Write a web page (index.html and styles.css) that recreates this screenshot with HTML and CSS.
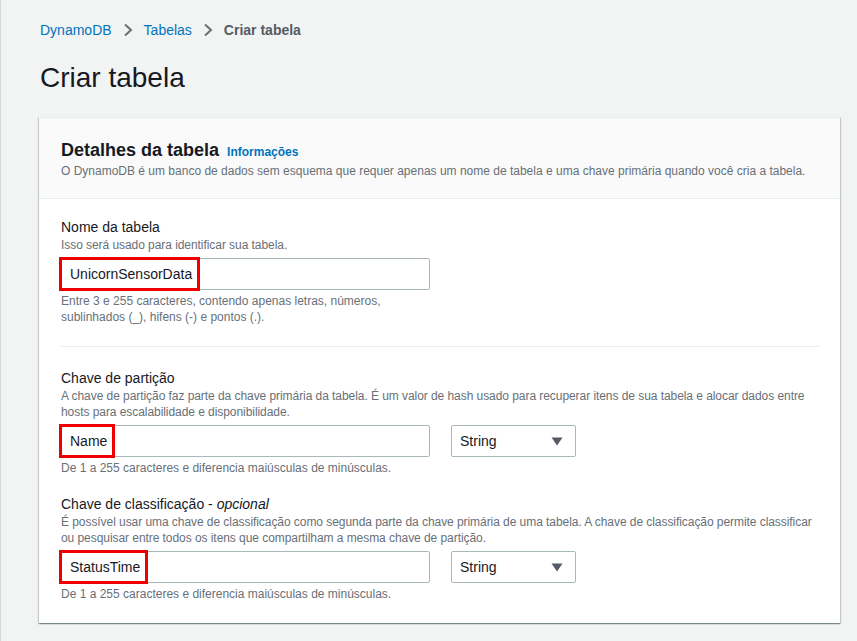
FILE: index.html
```html
<!DOCTYPE html>
<html lang="pt-BR">
<head>
<meta charset="utf-8">
<title>Criar tabela</title>
<link rel="stylesheet" href="styles.css">
</head>
<body>
<div class="page">
  <nav class="breadcrumb">
    <a class="crumb-link" href="#">DynamoDB</a>
    <svg class="chev" width="10" height="14" viewBox="0 0 10 14"><path d="M2 1.5 L8 7 L2 12.5" fill="none" stroke="#687078" stroke-width="2"/></svg>
    <a class="crumb-link" href="#">Tabelas</a>
    <svg class="chev" width="10" height="14" viewBox="0 0 10 14"><path d="M2 1.5 L8 7 L2 12.5" fill="none" stroke="#687078" stroke-width="2"/></svg>
    <span class="crumb-current">Criar tabela</span>
  </nav>
  <h1 class="page-title">Criar tabela</h1>

  <section class="card">
    <header class="card-header">
      <div class="card-title-row">
        <h2 class="card-title">Detalhes da tabela</h2>
        <a class="info-link" href="#">Informações</a>
      </div>
      <p class="card-desc">O DynamoDB é um banco de dados sem esquema que requer apenas um nome de tabela e uma chave primária quando você cria a tabela.</p>
    </header>

    <div class="card-body">
      <div class="field">
        <div class="field-label">Nome da tabela</div>
        <div class="field-desc">Isso será usado para identificar sua tabela.</div>
        <div class="input-row">
          <div class="text-input"><span class="hl">UnicornSensorData</span></div>
        </div>
        <div class="field-constraint narrow">Entre 3 e 255 caracteres, contendo apenas letras, números, sublinhados (_), hifens (-) e pontos (.).</div>
      </div>

      <div class="divider"></div>

      <div class="field">
        <div class="field-label">Chave de partição</div>
        <div class="field-desc">A chave de partição faz parte da chave primária da tabela. É um valor de hash usado para recuperar itens de sua tabela e alocar dados entre hosts para escalabilidade e disponibilidade.</div>
        <div class="input-row">
          <div class="text-input"><span class="hl">Name</span></div>
          <div class="select">
            <span>String</span>
            <svg class="caret" width="12" height="9" viewBox="0 0 12 9"><path d="M0.5 0.5 H11.5 L6 8.5 Z" fill="#545b64"/></svg>
          </div>
        </div>
        <div class="field-constraint">De 1 a 255 caracteres e diferencia maiúsculas de minúsculas.</div>
      </div>

      <div class="field field-next">
        <div class="field-label">Chave de classificação - <i>opcional</i></div>
        <div class="field-desc">É possível usar uma chave de classificação como segunda parte da chave primária de uma tabela. A chave de classificação permite classificar ou pesquisar entre todos os itens que compartilham a mesma chave de partição.</div>
        <div class="input-row">
          <div class="text-input"><span class="hl">StatusTime</span></div>
          <div class="select">
            <span>String</span>
            <svg class="caret" width="12" height="9" viewBox="0 0 12 9"><path d="M0.5 0.5 H11.5 L6 8.5 Z" fill="#545b64"/></svg>
          </div>
        </div>
        <div class="field-constraint">De 1 a 255 caracteres e diferencia maiúsculas de minúsculas.</div>
      </div>
    </div>
  </section>
</div>
</body>
</html>
```

FILE: styles.css
```css
* { box-sizing: border-box; }

html, body {
  margin: 0;
  padding: 0;
}

body {
  background: #f2f3f3;
  font-family: "Liberation Sans", Arial, sans-serif;
  color: #16191f;
  border-left: 1px solid #d5dbdb;
  min-height: 641px;
}

.page {
  padding: 20px 17px 0 38px;
}

.breadcrumb {
  display: flex;
  align-items: center;
  gap: 8px;
  height: 20px;
  font-size: 14px;
  line-height: 20px;
  padding-left: 1px;
}

.crumb-link {
  color: #0073bb;
  text-decoration: none;
}

.chev {
  display: block;
  margin: 0 3px;
}

.crumb-current {
  color: #545b64;
  font-weight: bold;
}

.page-title {
  margin: 20px 0 0 1px;
  font-size: 28px;
  line-height: 36px;
  font-weight: normal;
  color: #16191f;
}

.card {
  margin-top: 21px;
  background: #ffffff;
  box-shadow: 0 1px 1px 0 rgba(0, 28, 36, 0.3), 1px 1px 1px 0 rgba(0, 28, 36, 0.15), -1px 1px 1px 0 rgba(0, 28, 36, 0.15);
  border-top: 1px solid #eaeded;
}

.card-header {
  background: #fafafa;
  border-bottom: 1px solid #eaeded;
  padding: 21px 20px 19px 22px;
}

.card-title-row {
  display: flex;
  align-items: baseline;
  gap: 8px;
}

.card-title {
  margin: 0;
  font-size: 18px;
  line-height: 22px;
  font-weight: bold;
  color: #16191f;
}

.info-link {
  font-size: 12px;
  font-weight: bold;
  color: #0073bb;
  text-decoration: none;
}

.card-desc {
  margin: 2px 0 0;
  font-size: 12px;
  line-height: 16px;
  color: #687078;
}

.card-body {
  padding: 18px 20px 21px 20px;
}

.field-label {
  font-size: 14px;
  line-height: 20px;
  color: #16191f;
  padding-left: 2px;
}

.field-desc {
  font-size: 12px;
  line-height: 16px;
  color: #687078;
  padding-left: 2px;
  letter-spacing: -0.06px;
}

.input-row {
  display: flex;
  gap: 21px;
  margin-top: 5px;
}

.text-input {
  width: 371px;
  height: 32px;
  border: 1px solid #aab7b8;
  border-radius: 2px;
  background: #ffffff;
  display: flex;
  font-size: 14px;
  color: #16191f;
}

.hl {
  margin: -2px 0 -2px -1px;
  border: 3px solid #ee0000;
  padding: 0 5px 0 8px;
  display: flex;
  align-items: center;
}

.select {
  width: 125px;
  height: 32px;
  border: 1px solid #aab7b8;
  border-radius: 2px;
  background: #ffffff;
  display: flex;
  align-items: center;
  justify-content: space-between;
  padding: 0 12px 0 8px;
  font-size: 14px;
  color: #16191f;
}

.caret {
  display: block;
}

.field-constraint {
  margin-top: 3px;
  font-size: 12px;
  line-height: 16px;
  color: #687078;
  padding-left: 2px;
}

.field-constraint.narrow {
  width: 371px;
}

.divider {
  height: 1px;
  background: #eaeded;
  margin: 21px 0 21px 2px;
}

.field-next {
  margin-top: 18px;
}
```
